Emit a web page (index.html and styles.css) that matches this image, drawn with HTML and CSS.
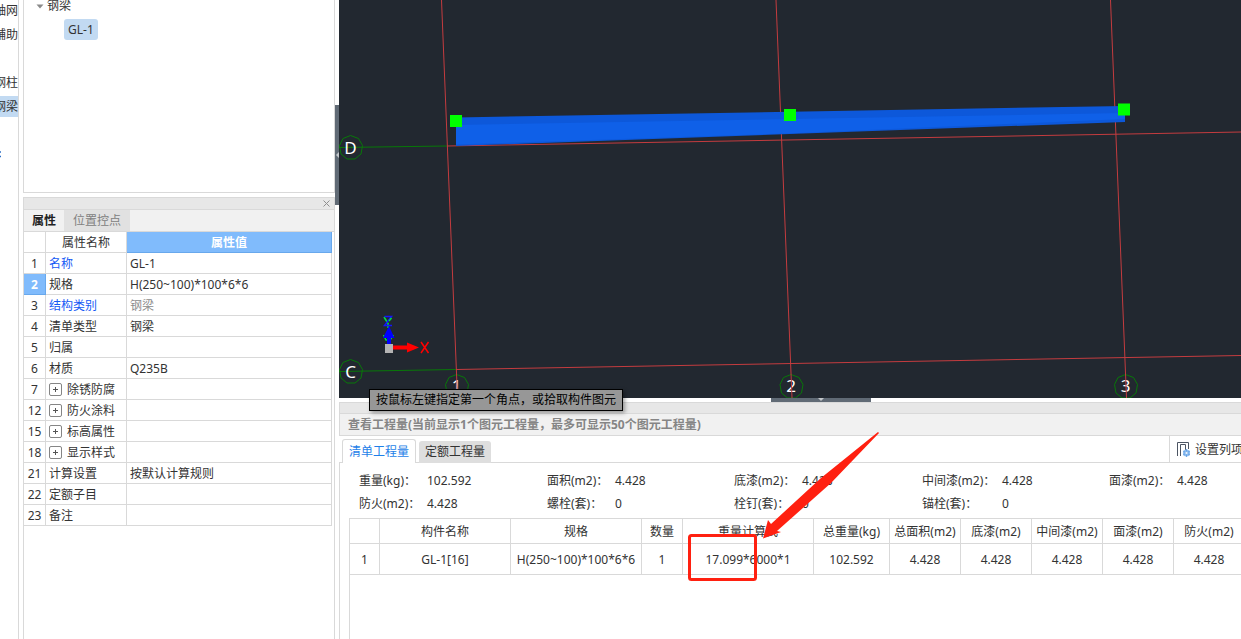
FILE: index.html
```html
<!DOCTYPE html>
<html lang="zh-CN">
<head>
<meta charset="utf-8">
<meta name="viewport" content="width=device-width, initial-scale=1">
<title>钢梁 GL-1</title>
<link rel="stylesheet" href="styles.css">
</head>
<body>
<div class="app">
  <nav class="rail" aria-label="构件类型">
    <button class="rail-item" type="button">轴网</button>
    <button class="rail-item" type="button">辅助</button>
    <span class="rail-gap"></span>
    <button class="rail-item" type="button">钢柱</button>
    <button class="rail-item rail-item-active" type="button">钢梁</button>
    <span class="rail-gap"></span>
    <svg class="rail-mark" width="2" height="7" aria-hidden="true"><path d="M0 1H1M0 5.500H1" stroke="#2b6cc4" stroke-width="1.500"/></svg>
  </nav>

  <aside class="side">
    <section class="tree" aria-label="构件列表">
      <div class="tree-group">
        <svg width="8" height="5" aria-hidden="true"><path d="M0.500 0.500H7.500L4 4.500Z" fill="#8a8a8a"/></svg>
        <span>钢梁</span>
      </div>
      <button class="tree-leaf" type="button">GL-1</button>
    </section>

    <section class="props">
      <header class="props-bar">
        <button class="close" type="button" aria-label="关闭"><svg width="7" height="7" aria-hidden="true"><path d="M0.500 0.500L6.500 6.500M6.500 0.500L0.500 6.500" stroke="#8e8e8e"/></svg></button>
      </header>
      <div class="props-tabs">
        <button class="ptab ptab-active" type="button">属性</button>
        <button class="ptab" type="button">位置控点</button>
      </div>
      <table class="ptable">
        <colgroup><col class="p-no"><col class="p-name"><col></colgroup>
        <thead><tr><th></th><th>属性名称</th><th class="hot">属性值</th></tr></thead>
        <tbody>
          <tr><th>1</th><td class="link">名称</td><td>GL-1</td></tr>
          <tr><th class="hot">2</th><td>规格</td><td>H(250~100)*100*6*6</td></tr>
          <tr><th>3</th><td class="link">结构类别</td><td class="muted">钢梁</td></tr>
          <tr><th>4</th><td>清单类型</td><td>钢梁</td></tr>
          <tr><th>5</th><td>归属</td><td></td></tr>
          <tr><th>6</th><td>材质</td><td>Q235B</td></tr>
          <tr><th>7</th><td><div class="fold"><button class="plus" type="button" aria-label="展开除锈防腐"></button>除锈防腐</div></td><td></td></tr>
          <tr><th>12</th><td><div class="fold"><button class="plus" type="button" aria-label="展开防火涂料"></button>防火涂料</div></td><td></td></tr>
          <tr><th>15</th><td><div class="fold"><button class="plus" type="button" aria-label="展开标高属性"></button>标高属性</div></td><td></td></tr>
          <tr><th>18</th><td><div class="fold"><button class="plus" type="button" aria-label="展开显示样式"></button>显示样式</div></td><td></td></tr>
          <tr><th>21</th><td>计算设置</td><td>按默认计算规则</td></tr>
          <tr><th>22</th><td>定额子目</td><td></td></tr>
          <tr><th>23</th><td>备注</td><td></td></tr>
        </tbody>
      </table>
    </section>
  </aside>

  <div class="vsplit">
    <button class="vgrip" type="button" aria-label="收起左侧面板"><svg width="3" height="6" aria-hidden="true"><path d="M3 0V6L0 3Z" fill="#c3c7cb"/></svg></button>
  </div>

  <main class="work">
    <div class="view">
      <svg class="scene" role="img" aria-label="轴网与钢梁模型">
        <g stroke="#087808" fill="none">
          <path d="M0 147.500L108 146M0 371.500L117 369.500"/>
          <path id="bubble" d="M11.500 135.500L19.500 138.500L23.500 145.500L22 154L16 159L8 159L2 154L0.500 145.500L4 138.500Z"/>
          <use href="#bubble" y="224"/>
          <use href="#bubble" x="106" y="239"/>
          <use href="#bubble" x="440.500" y="239"/>
          <use href="#bubble" x="775" y="239"/>
        </g>
        <g class="axis-name">
          <text x="11.500" y="154">D</text>
          <text x="11.500" y="378">C</text>
          <text x="117.500" y="392">1</text>
          <text x="452" y="392">2</text>
          <text x="786.500" y="392">3</text>
        </g>
        <g stroke="#c43c3f" fill="none">
          <path d="M102.500 0L118.500 398M437 0L453 398M771.500 0L787.500 398"/>
          <path d="M108 146L902 132M117 369.500L902 355.500"/>
        </g>
        <path d="M117 117.500L786 106V122L117 146Z" fill="#0d58da"/>
        <path d="M117 125L786 113V119L460 133L117 144.500Z" fill="#0f60e8"/>
        <g fill="#00ff00">
          <rect x="111" y="115" width="12" height="12"/>
          <rect x="445" y="109" width="12" height="12"/>
          <rect x="779" y="103.500" width="12" height="12"/>
        </g>
        <g fill="none" stroke-width="1.500">
          <path d="M45 317L49 323.500M49 323V328M44.500 335L47 340H51L54.500 335" stroke="#00e040"/>
          <path d="M45.500 316.500H52.500L45.500 325.500H53" stroke="#1414ff"/>
          <path d="M50 321L52.500 318" stroke="#00e040"/>
          <path d="M82 342L89.500 353M89.500 342L82 353" stroke="#ff0000"/>
        </g>
        <path d="M50 326L55.500 338H52V346H48V338H44Z" fill="#0000ff"/>
        <path d="M54 345.500H68V342.500L80 347.500L68 352.500V349.500H54Z" fill="#ff0000"/>
        <rect x="46" y="344" width="8" height="9" fill="#b4b4b4"/>
      </svg>
      <div class="tip" role="tooltip">按鼠标左键指定第一个角点，或拾取构件图元</div>
    </div>
    <div class="hsplit">
      <button class="hgrip" type="button" aria-label="收起工程量面板"><svg width="6" height="3" aria-hidden="true"><path d="M0 0H6L3 3Z" fill="#c3c7cb"/></svg></button>
    </div>

    <section class="qty">
      <div class="qty-bar"></div>
      <h2 class="qty-title">查看工程量(当前显示1个图元工程量，最多可显示50个图元工程量)</h2>
      <div class="qty-tabs">
        <button class="qtab qtab-active" type="button">清单工程量</button>
        <button class="qtab" type="button">定额工程量</button>
        <div class="tools">
          <button class="setcol" type="button">
            <svg width="14" height="15" aria-hidden="true"><path d="M0.500 14V0.500H11.500V7M3.500 14V2.500H8.500V9" fill="none" stroke="#4c5563"/><circle cx="9.500" cy="11" r="3.500" fill="#8dbdf0"/><path d="M9.500 7V15M6 9L13 13M13 9L6 13" stroke="#5b9be2" stroke-width="0.800"/><circle cx="9.500" cy="11" r="1.200" fill="#e6f1fc"/></svg>
            设置列项
          </button>
        </div>
      </div>
      <div class="qty-body">
        <div class="sums">
          <dl class="sum"><dt>重量(kg)：</dt><dd>102.592</dd><dt>防火(m2)：</dt><dd>4.428</dd></dl>
          <dl class="sum"><dt>面积(m2)：</dt><dd>4.428</dd><dt>螺栓(套)：</dt><dd>0</dd></dl>
          <dl class="sum"><dt>底漆(m2)：</dt><dd>4.428</dd><dt>栓钉(套)：</dt><dd>0</dd></dl>
          <dl class="sum sum-wide"><dt>中间漆(m2)：</dt><dd>4.428</dd><dt>锚栓(套)：</dt><dd>0</dd></dl>
          <dl class="sum"><dt>面漆(m2)：</dt><dd>4.428</dd></dl>
        </div>
        <div class="grid">
          <table class="qtable">
            <colgroup><col class="q-no"><col class="q-text"><col class="q-text"><col class="q-count"><col class="q-text"><col class="q-total"><col class="q-area"><col class="q-area"><col class="q-area"><col class="q-area"><col class="q-area"></colgroup>
            <thead><tr><th></th><th>构件名称</th><th>规格</th><th>数量</th><th>重量计算式</th><th>总重量(kg)</th><th>总面积(m2)</th><th>底漆(m2)</th><th>中间漆(m2)</th><th>面漆(m2)</th><th>防火(m2)</th></tr></thead>
            <tbody><tr><td>1</td><td>GL-1[16]</td><td>H(250~100)*100*6*6</td><td>1</td><td>17.099*6000*1</td><td>102.592</td><td>4.428</td><td>4.428</td><td>4.428</td><td>4.428</td><td>4.428</td></tr></tbody>
          </table>
        </div>
      </div>
      <svg class="note" width="200" height="152" aria-hidden="true">
        <rect x="10.500" y="105.500" width="66" height="44" rx="2" fill="none" stroke="#ff2010" stroke-width="3"/>
        <path d="M199 2L142 48L92 94L89 90L84 108.500L102 102L98 101L152 53L200 3Z" fill="#ff2010"/>
      </svg>
    </section>
  </main>
</div>
</body>
</html>
```
FILE: styles.css
```css
* {
  box-sizing: border-box;
}

body {
  margin: 0;
  background: #fff;
  color: #333;
  font: 12px/20px "Noto Sans", "Noto Sans CJK SC", sans-serif;
}

button {
  margin: 0;
  padding: 0;
  border: 0;
  background: none;
  color: inherit;
  font: inherit;
  white-space: nowrap;
}

svg {
  display: block;
  flex: none;
}

.app {
  display: flex;
  height: 100vh;
  overflow: hidden;
}

/* Component type rail */
.rail {
  display: flex;
  flex: none;
  flex-direction: column;
  width: 19px;
  border-right: 1px solid #d9d9d9;
  overflow: hidden;
}

.rail-item {
  display: flex;
  flex: none;
  justify-content: flex-end;
  height: 21px;
  margin-bottom: 3px;
  line-height: 22px;
}

.rail-item-active {
  background: #c2daf2;
}

.rail-gap {
  flex: none;
  height: 24px;
}

.rail-mark {
  margin-top: 7px;
}

/* Left column */
.side {
  display: flex;
  flex: none;
  flex-direction: column;
  gap: 4px;
  width: 312px;
  margin-left: 4px;
}

.tree {
  flex: none;
  height: 193px;
  border: solid #d9d9d9;
  border-width: 0 1px 1px;
  padding-left: 12px;
}

.tree-group {
  display: flex;
  align-items: center;
  gap: 3px;
  height: 12px;
  margin-bottom: 7px;
}

.tree-leaf {
  display: block;
  height: 21px;
  margin-left: 28px;
  padding: 0 4px;
  border-radius: 3px;
  background: #c2daf2;
}

.props {
  flex: 1;
  border: solid #d9d9d9;
  border-width: 1px 1px 0;
}

.props-bar {
  display: flex;
  align-items: center;
  justify-content: flex-end;
  height: 12px;
  padding-right: 4px;
  border-bottom: 1px solid #d9d9d9;
  background: #e7e7e7;
}

.props-tabs {
  display: flex;
  height: 22px;
  border-bottom: 1px solid #d9d9d9;
  background: #f1f1f1;
}

.ptab {
  padding: 0 9px;
  background: #e1e1e1;
  color: #808080;
}

.ptab-active {
  padding: 0 8px;
  background: #f1f1f1;
  color: #222;
  font-weight: 700;
}

.ptable,
.qtable {
  border-spacing: 0;
  table-layout: fixed;
}

.ptable {
  width: 308px;
}

.p-no {
  width: 22px;
}

.p-name {
  width: 81px;
}

.ptable th,
.ptable td {
  height: 21px;
  padding: 2px 3px 0;
  border: solid #d9d9d9;
  border-width: 0 1px 1px 0;
  font-weight: 400;
  line-height: 18px;
  text-align: left;
  white-space: nowrap;
}

.ptable th {
  padding: 2px 0 0;
  text-align: center;
}

.ptable .hot {
  border-color: #68a8ec;
  background: #80bbfc;
  color: #fff;
  font-weight: 700;
}

.ptable .link {
  color: #1459f5;
}

.ptable .muted {
  color: #8c8c8c;
}

.fold {
  display: flex;
  align-items: center;
  gap: 5px;
}

.plus {
  width: 13px;
  height: 13px;
  margin-bottom: 2px;
  border: 1px solid #858585;
  border-radius: 2px;
  background:
    linear-gradient(#555, #555) center / 5px 1px no-repeat,
    linear-gradient(#555, #555) center / 1px 5px no-repeat;
}

/* Splitters */
.vsplit {
  flex: none;
  width: 4px;
  padding-top: 105px;
}

.vgrip,
.hgrip {
  display: flex;
  align-items: center;
  background: #606a75;
}

.vgrip {
  justify-content: flex-end;
  width: 4px;
  height: 100px;
}

.hsplit {
  display: flex;
  flex: none;
  justify-content: center;
  height: 4px;
  padding-left: 62px;
}

.hgrip {
  align-items: flex-start;
  justify-content: center;
  width: 100px;
}

/* Model view */
.work {
  display: flex;
  flex: 1;
  flex-direction: column;
  min-width: 0;
}

.view {
  position: relative;
  flex: none;
  background: #222830;
}

.scene {
  width: 100%;
  height: 398px;
}

.axis-name {
  fill: #fff;
  font-size: 17px;
  text-anchor: middle;
}

.tip {
  position: absolute;
  z-index: 1;
  top: 389px;
  left: 30px;
  padding: 0 6px;
  border: 1px solid #000;
  background: #979797;
  box-shadow: 2px 2px 4px rgba(0, 0, 0, 0.35);
  color: #000;
  white-space: nowrap;
}

/* Quantities */
.qty {
  position: relative;
  display: flex;
  flex: 1;
  flex-direction: column;
}

.qty-bar {
  height: 12px;
  border: solid #d9d9d9;
  border-width: 1px 0 1px 1px;
  background: #e7e7e7;
}

.qty-title {
  height: 22px;
  margin: 0;
  padding-left: 8px;
  border: solid #d9d9d9;
  border-width: 0 0 1px 1px;
  background: #f1f1f1;
  color: #858585;
  font-size: 12px;
  line-height: 21px;
}

.qty-tabs {
  display: flex;
  align-items: flex-end;
  gap: 3px;
  height: 27px;
  padding-left: 3px;
  box-shadow: inset 0 -1px #d9d9d9;
}

.qtab {
  height: 22px;
  padding: 0 6px;
  border-radius: 3px 3px 0 0;
  background: #dedede;
}

.qtab-active {
  height: 24px;
  border: solid #d9d9d9;
  border-width: 1px 1px 0;
  background: #fff;
  color: #1f7fe8;
}

.tools {
  width: 72px;
  height: 27px;
  margin-left: auto;
  padding-left: 7px;
  border-left: 1px solid #d9d9d9;
}

.setcol {
  display: flex;
  align-items: center;
  gap: 4px;
  height: 27px;
}

.qty-body {
  display: flex;
  flex: 1;
  flex-direction: column;
  border-left: 1px solid #d9d9d9;
}

.sums {
  display: grid;
  grid-template-columns: 188px 187px 188px 187px 1fr;
  padding: 6px 0 3px 19px;
}

.sum {
  display: grid;
  grid-template-columns: 68px 1fr;
  align-content: start;
  margin: 0;
  line-height: 23px;
  white-space: nowrap;
}

.sum-wide {
  grid-template-columns: 80px 1fr;
}

.sum dd {
  margin: 0;
}

.grid {
  flex: 1;
  margin-left: 9px;
  border: solid #d9d9d9;
  border-width: 1px 0 0 1px;
  overflow: hidden;
}

.qtable {
  width: 894px;
}

.q-no {
  width: 30px;
}

.q-text {
  width: 131px;
}

.q-count {
  width: 41px;
}

.q-total {
  width: 76px;
}

.q-area {
  width: 71px;
}

.qtable th,
.qtable td {
  height: 25px;
  padding: 2px 0 0;
  border: solid #d9d9d9;
  border-width: 0 1px 1px 0;
  font-weight: 400;
  text-align: center;
  white-space: nowrap;
}

.qtable td {
  height: 31px;
}

/* Callout drawn over the quantity table */
.note {
  position: absolute;
  top: 28px;
  left: 340px;
  pointer-events: none;
}
```
